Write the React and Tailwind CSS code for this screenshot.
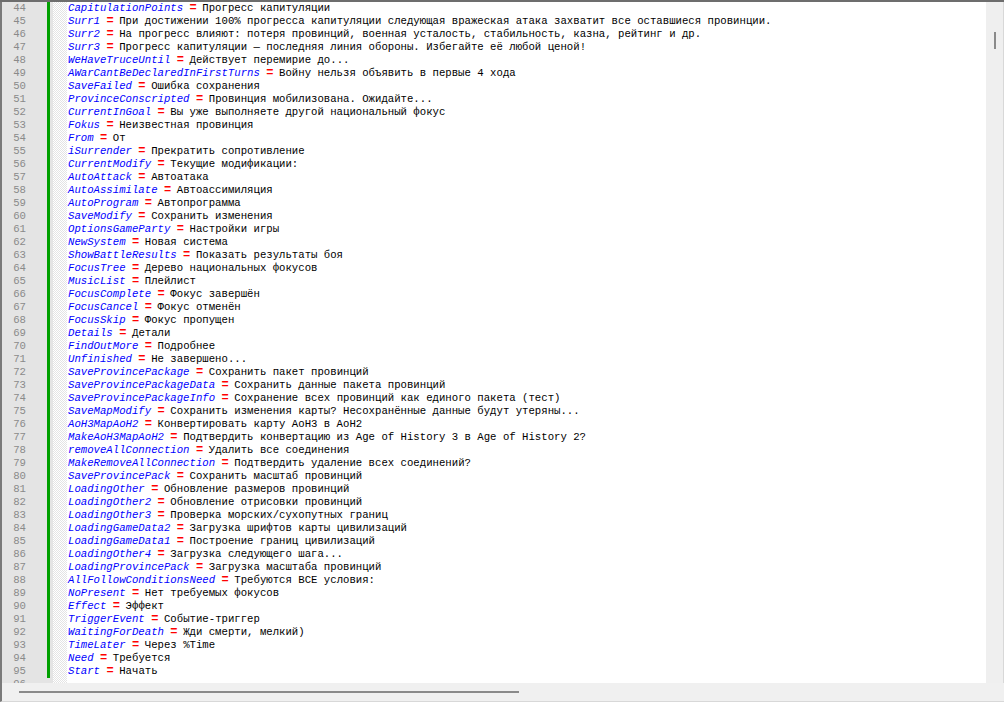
const rows = [
  ["CapitulationPoints", "Прогресс капитуляции"],
  ["Surr1", "При достижении 100% прогресса капитуляции следующая вражеская атака захватит все оставшиеся провинции."],
  ["Surr2", "На прогресс влияют: потеря провинций, военная усталость, стабильность, казна, рейтинг и др."],
  ["Surr3", "Прогресс капитуляции — последняя линия обороны. Избегайте её любой ценой!"],
  ["WeHaveTruceUntil", "Действует перемирие до..."],
  ["AWarCantBeDeclaredInFirstTurns", "Войну нельзя объявить в первые 4 хода"],
  ["SaveFailed", "Ошибка сохранения"],
  ["ProvinceConscripted", "Провинция мобилизована. Ожидайте..."],
  ["CurrentInGoal", "Вы уже выполняете другой национальный фокус"],
  ["Fokus", "Неизвестная провинция"],
  ["From", "От"],
  ["iSurrender", "Прекратить сопротивление"],
  ["CurrentModify", "Текущие модификации:"],
  ["AutoAttack", "Автоатака"],
  ["AutoAssimilate", "Автоассимиляция"],
  ["AutoProgram", "Автопрограмма"],
  ["SaveModify", "Сохранить изменения"],
  ["OptionsGameParty", "Настройки игры"],
  ["NewSystem", "Новая система"],
  ["ShowBattleResults", "Показать результаты боя"],
  ["FocusTree", "Дерево национальных фокусов"],
  ["MusicList", "Плейлист"],
  ["FocusComplete", "Фокус завершён"],
  ["FocusCancel", "Фокус отменён"],
  ["FocusSkip", "Фокус пропущен"],
  ["Details", "Детали"],
  ["FindOutMore", "Подробнее"],
  ["Unfinished", "Не завершено..."],
  ["SaveProvincePackage", "Сохранить пакет провинций"],
  ["SaveProvincePackageData", "Сохранить данные пакета провинций"],
  ["SaveProvincePackageInfo", "Сохранение всех провинций как единого пакета (тест)"],
  ["SaveMapModify", "Сохранить изменения карты? Несохранённые данные будут утеряны..."],
  ["AoH3MapAoH2", "Конвертировать карту AoH3 в AoH2"],
  ["MakeAoH3MapAoH2", "Подтвердить конвертацию из Age of History 3 в Age of History 2?"],
  ["removeAllConnection", "Удалить все соединения"],
  ["MakeRemoveAllConnection", "Подтвердить удаление всех соединений?"],
  ["SaveProvincePack", "Сохранить масштаб провинций"],
  ["LoadingOther", "Обновление размеров провинций"],
  ["LoadingOther2", "Обновление отрисовки провинций"],
  ["LoadingOther3", "Проверка морских/сухопутных границ"],
  ["LoadingGameData2", "Загрузка шрифтов карты цивилизаций"],
  ["LoadingGameData1", "Построение границ цивилизаций"],
  ["LoadingOther4", "Загрузка следующего шага..."],
  ["LoadingProvincePack", "Загрузка масштаба провинций"],
  ["AllFollowConditionsNeed", "Требуются ВСЕ условия:"],
  ["NoPresent", "Нет требуемых фокусов"],
  ["Effect", "Эффект"],
  ["TriggerEvent", "Событие-триггер"],
  ["WaitingForDeath", "Жди смерти, мелкий)"],
  ["TimeLater", "Через %Time"],
  ["Need", "Требуется"],
  ["Start", "Начать"],
];

export default function App() {
  return (
    <div className="flex h-[702px] w-[1004px] flex-col overflow-hidden bg-[#f0f0f0] font-['Liberation_Mono',monospace]">
      <div className="h-[2px] bg-[#6d6d6d]" />

      <div className="flex h-[681px] border-l-2 border-[#7a7a7a]">
        {/* line numbers */}
        <div className="w-[45px] overflow-hidden bg-[#e4e4e4] text-[#8a8a8a]">
          {rows.map((_, i) => (
            <div key={i} className="h-[13px] pr-[21px] text-right text-[10.67px] leading-[13px]">
              {i + 44}
            </div>
          ))}
          <div className="h-[13px] pr-[21px] text-right text-[10.67px] leading-[13px]">96</div>
        </div>

        {/* change bar and fold margin */}
        <div className="flex w-[20px] bg-[#e4e4e4]">
          <div className="h-[676px] w-[3px] bg-[#00a000]" />
          <div className="ml-[3px] flex-1 bg-[repeating-conic-gradient(#e4e4e4_0_25%,#ffffff_0_50%)] bg-[length:2px_2px]" />
        </div>

        <div className="flex-1 overflow-hidden bg-white pl-px">
          {rows.map(([key, value]) => (
            <div key={key} className="flex h-[13px] items-baseline whitespace-pre leading-[13px]">
              <span className="text-[10.67px] italic text-[#0000ff]">{key}</span>
              <span className="text-[12px] font-bold tracking-[-0.8px] text-[#ff0000]"> = </span>
              <span className="text-[10.67px] text-black">{value}</span>
            </div>
          ))}
        </div>

        {/* vertical scrollbar */}
        <div className="w-[18px] border-r border-[#d8d8d8] bg-[#efefef] pt-[30px]">
          <div className="ml-[8px] h-[17px] w-[2px] bg-[#8a8a8a]" />
        </div>
      </div>

      {/* horizontal scrollbar */}
      <div className="h-[19px] border-b border-l-2 border-b-[#d8d8d8] border-l-[#7a7a7a] pl-[17px] pt-[8px]">
        <div className="h-[2px] w-[500px] bg-[#8a8a8a]" />
      </div>
    </div>
  );
}
